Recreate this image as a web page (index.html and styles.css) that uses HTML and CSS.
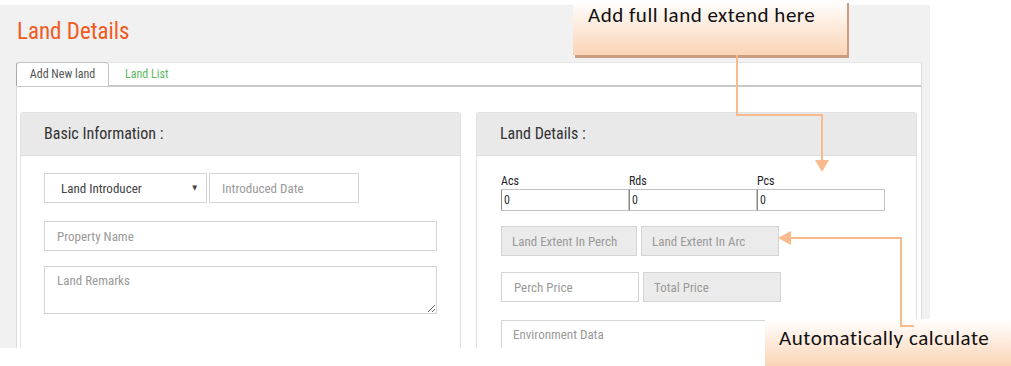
FILE: index.html
```html
<!DOCTYPE html>
<html lang="en">
  <head>
    <meta charset="UTF-8" />
    <title>Land Details</title>
    <link rel="stylesheet" href="styles.css">
  </head>
  <body>
    <div class="page">
      <h1 class="page-title">Land Details</h1>
      <div class="tabs">
        <div class="tab-nav">
          <div class="tab active">Add New land</div>
          <div class="tab link">Land List</div>
        </div>
        <div class="tab-content">
          <div class="panel">
            <div class="panel-heading">Basic Information :</div>
            <div class="panel-body">
              <div class="row">
                <div class="select">Land Introducer <span class="caret">&#9660;</span></div>
                <input class="field date" placeholder="Introduced Date">
              </div>
              <div class="row gap18">
                <input class="field wide" placeholder="Property Name">
              </div>
              <div class="row gap15">
                <textarea class="field wide area" placeholder="Land Remarks"></textarea>
              </div>
            </div>
          </div>
          <div class="panel">
            <div class="panel-heading">Land Details :</div>
            <div class="panel-body right">
              <div class="extent">
                <label class="unit">Acs<input class="small" value="0"></label>
                <label class="unit">Rds<input class="small" value="0"></label>
                <label class="unit">Pcs<input class="small" value="0"></label>
              </div>
              <div class="row pair gap15">
                <input class="field calc w136" placeholder="Land Extent In Perch" readonly>
                <input class="field calc w138" placeholder="Land Extent In Arc" readonly>
              </div>
              <div class="row pair gap16">
                <input class="field w138" placeholder="Perch Price">
                <input class="field calc w138" placeholder="Total Price" readonly>
              </div>
              <div class="row gap18">
                <textarea class="field env" placeholder="Environment Data"></textarea>
              </div>
            </div>
          </div>
        </div>
      </div>
    </div>

    <!-- annotation callouts -->
    <div class="note note-top">Add full land extend here</div>
    <div class="note note-bottom">Automatically calculate</div>
    <svg class="arrows" width="1011" height="366" xmlns="http://www.w3.org/2000/svg">
      <path d="M737 55 V115 H822 V161" fill="none" stroke="#f9bb8d" stroke-width="2"/>
      <polygon points="815,160 829,160 822,172" fill="#f9bb8d"/>
      <path d="M790 238 H901 V326 H914" fill="none" stroke="#f9bb8d" stroke-width="2"/>
      <polygon points="778,238 791,231 791,245" fill="#f9bb8d"/>
    </svg>
  </body>
</html>
```

FILE: styles.css
```css
html,
body {
  margin: 0;
  background: #ffffff;
}
body {
  position: relative;
  width: 1011px;
  height: 366px;
  overflow: hidden;
  font-family: "Roboto Condensed", "Liberation Sans Narrow", "DejaVu Sans Condensed", Roboto, sans-serif;
}
.page {
  box-sizing: border-box;
  width: 930px;
  height: 343px;
  margin-top: 5px;
  padding: 0 8px 0 16px;
  background: #f1f1f1;
  overflow: hidden;
}
.page-title {
  box-sizing: border-box;
  height: 57px;
  margin: 0;
  padding: 12px 0 0 1px;
  font-size: 23px;
  line-height: 30px;
  font-weight: normal;
  color: #f15a22;
}

.tabs {
  height: 300px;
  background: #ffffff;
  border: 1px solid #dcdcdc;
  border-top-color: #e4e4e4;
}
.tab-nav {
  display: flex;
  height: 22px;
  border-bottom: 2px solid #c9c9c9;
}
.tab {
  font-size: 12px;
  line-height: 22px;
}
.tab.active {
  box-sizing: border-box;
  width: 93px;
  height: 24px;
  margin: -1px 0 0 -1px;
  text-align: center;
  color: #555555;
  background: #ffffff;
  border: 1px solid #c4c4c4;
  border-left-color: #aaaaaa;
  border-bottom: none;
  border-radius: 4px 4px 0 0;
}
.tab.link {
  padding-left: 16px;
  color: #5cb85c;
}

.tab-content {
  display: flex;
  gap: 15px;
  padding: 25px 4px 0 3px;
}
.panel {
  width: 441px;
  height: 260px;
  box-sizing: border-box;
  border: 1px solid #e2e2e2;
  border-radius: 3px 3px 0 0;
}
.panel-heading {
  height: 42px;
  padding-left: 23px;
  line-height: 42px;
  font-size: 16px;
  color: #333333;
  background: #e9e9e9;
  border-bottom: 1px solid #dddddd;
}
.panel-body {
  padding: 17px 23px 0 23px;
}
.panel-body.right {
  padding: 18px 0 0 24px;
}

.row {
  display: flex;
  gap: 2px;
}
.row.pair {
  gap: 4px;
}
.gap15 {
  margin-top: 15px;
}
.gap16 {
  margin-top: 16px;
}
.gap18 {
  margin-top: 18px;
}

.field,
.select {
  box-sizing: border-box;
  height: 30px;
  margin: 0;
  padding: 0 0 0 12px;
  font-family: inherit;
  font-size: 13px;
  color: #444444;
  background: #ffffff;
  border: 1px solid #d4d4d4;
  border-radius: 0;
  outline: none;
}
.field::placeholder {
  color: #9a9a9a;
}
.select {
  display: flex;
  align-items: center;
  justify-content: space-between;
  width: 163px;
  padding: 0 9px 0 16px;
}
.caret {
  font-size: 7px;
  color: #444444;
}
.date {
  width: 150px;
}
.wide {
  width: 393px;
}
.area {
  height: 48px;
  padding-top: 6px;
  resize: vertical;
}
.calc {
  padding-left: 10px;
  background: #ebebeb;
}
.w136 {
  width: 136px;
}
.w138 {
  width: 138px;
}
.env {
  width: 383px;
  height: 40px;
  padding: 6px 0 0 11px;
  resize: none;
}

.extent {
  display: flex;
}
.unit {
  display: flex;
  flex-direction: column;
  width: 128px;
  font-size: 12px;
  line-height: 15px;
  color: #222222;
}
.small {
  box-sizing: border-box;
  height: 22px;
  margin: 0;
  padding: 0 0 0 2px;
  font-family: inherit;
  font-size: 12px;
  color: #333333;
  border: 1px solid #c2c2c2;
  border-left-color: #8a8a8a;
  outline: none;
}

.note {
  position: absolute;
  box-sizing: border-box;
  font-family: Carlito, Lato, "Open Sans", sans-serif;
  font-size: 21px;
  color: #111111;
}
.note-top {
  left: 573px;
  top: 0;
  width: 274px;
  height: 55px;
  padding: 2px 0 0 15px;
  letter-spacing: 0.5px;
  background: linear-gradient(#ffffff, #fad4b6);
  box-shadow: 2px 3px 0 #c99d80;
}
.note-bottom {
  left: 765px;
  top: 319px;
  width: 246px;
  height: 47px;
  padding: 6px 0 0 14px;
  letter-spacing: 0.55px;
  background: linear-gradient(#ffffff, #fbd5b6);
}
.arrows {
  position: absolute;
  left: 0;
  top: 0;
}
```
